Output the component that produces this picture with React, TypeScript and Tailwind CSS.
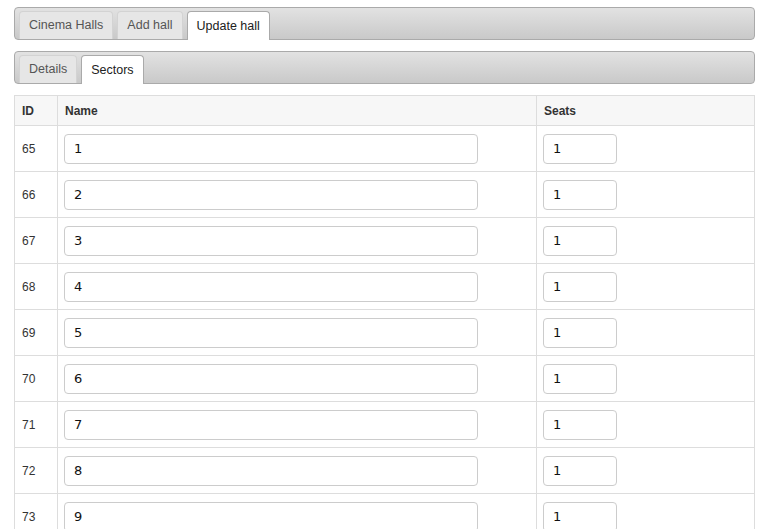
import React from "react";

const rows = [
  { id: 65, name: "1", seats: "1" },
  { id: 66, name: "2", seats: "1" },
  { id: 67, name: "3", seats: "1" },
  { id: 68, name: "4", seats: "1" },
  { id: 69, name: "5", seats: "1" },
  { id: 70, name: "6", seats: "1" },
  { id: 71, name: "7", seats: "1" },
  { id: 72, name: "8", seats: "1" },
  { id: 73, name: "9", seats: "1" },
];

function TabBar({ tabs, active }: { tabs: string[]; active: string }) {
  return (
    <div className="flex h-[33px] items-end gap-[4px] rounded-[4px] border border-[#aaaaaa] bg-gradient-to-b from-[#e2e2e2] to-[#c9c9c9] pl-[4px]">
      {tabs.map((t) => {
        const on = t === active;
        return (
          <div
            key={t}
            className={
              on
                ? "-mb-px flex h-[29px] items-center rounded-t-[4px] border border-b-0 border-[#aaaaaa] bg-white px-[9px] text-[12.5px] text-[#212121]"
                : "flex h-[28px] items-center rounded-t-[4px] border border-b-0 border-[#d3d3d3] bg-[#e6e6e6] px-[9px] text-[12.5px] text-[#555555]"
            }
          >
            {t}
          </div>
        );
      })}
    </div>
  );
}

export default function App() {
  return (
    <div
      className="ml-[14px] mr-[8px] pt-[7px]"
      style={{ fontFamily: '"Liberation Sans", Arial, sans-serif' }}
    >
      <TabBar tabs={["Cinema Halls", "Add hall", "Update hall"]} active="Update hall" />
      <div className="mt-[11px]">
        <TabBar tabs={["Details", "Sectors"]} active="Sectors" />
      </div>
      <table className="mt-[11px] w-full border-collapse text-[12px] text-[#333333]">
        <thead>
          <tr className="h-[30px] bg-[#f7f7f7]">
            <th className="w-[43px] border border-[#dddddd] px-[7px] text-left font-bold">ID</th>
            <th className="w-[479px] border border-[#dddddd] px-[7px] text-left font-bold">Name</th>
            <th className="border border-[#dddddd] px-[7px] text-left font-bold">Seats</th>
          </tr>
        </thead>
        <tbody>
          {rows.map((r) => (
            <tr key={r.id} className="h-[46px]">
              <td className="border border-[#dddddd] px-[7px] align-middle">{r.id}</td>
              <td className="border border-[#dddddd] px-[6px] align-middle">
                <input
                  defaultValue={r.name}
                  className="h-[30px] w-[414px] rounded-[4px] border border-[#cccccc] px-[9px] text-[13px] text-[#111111] outline-none"
                  style={{ fontFamily: '"DejaVu Sans", Verdana, sans-serif' }}
                />
              </td>
              <td className="border border-[#dddddd] px-[6px] align-middle">
                <input
                  defaultValue={r.seats}
                  className="h-[30px] w-[74px] rounded-[4px] border border-[#cccccc] px-[9px] text-[13px] text-[#111111] outline-none"
                  style={{ fontFamily: '"DejaVu Sans", Verdana, sans-serif' }}
                />
              </td>
            </tr>
          ))}
        </tbody>
      </table>
    </div>
  );
}
